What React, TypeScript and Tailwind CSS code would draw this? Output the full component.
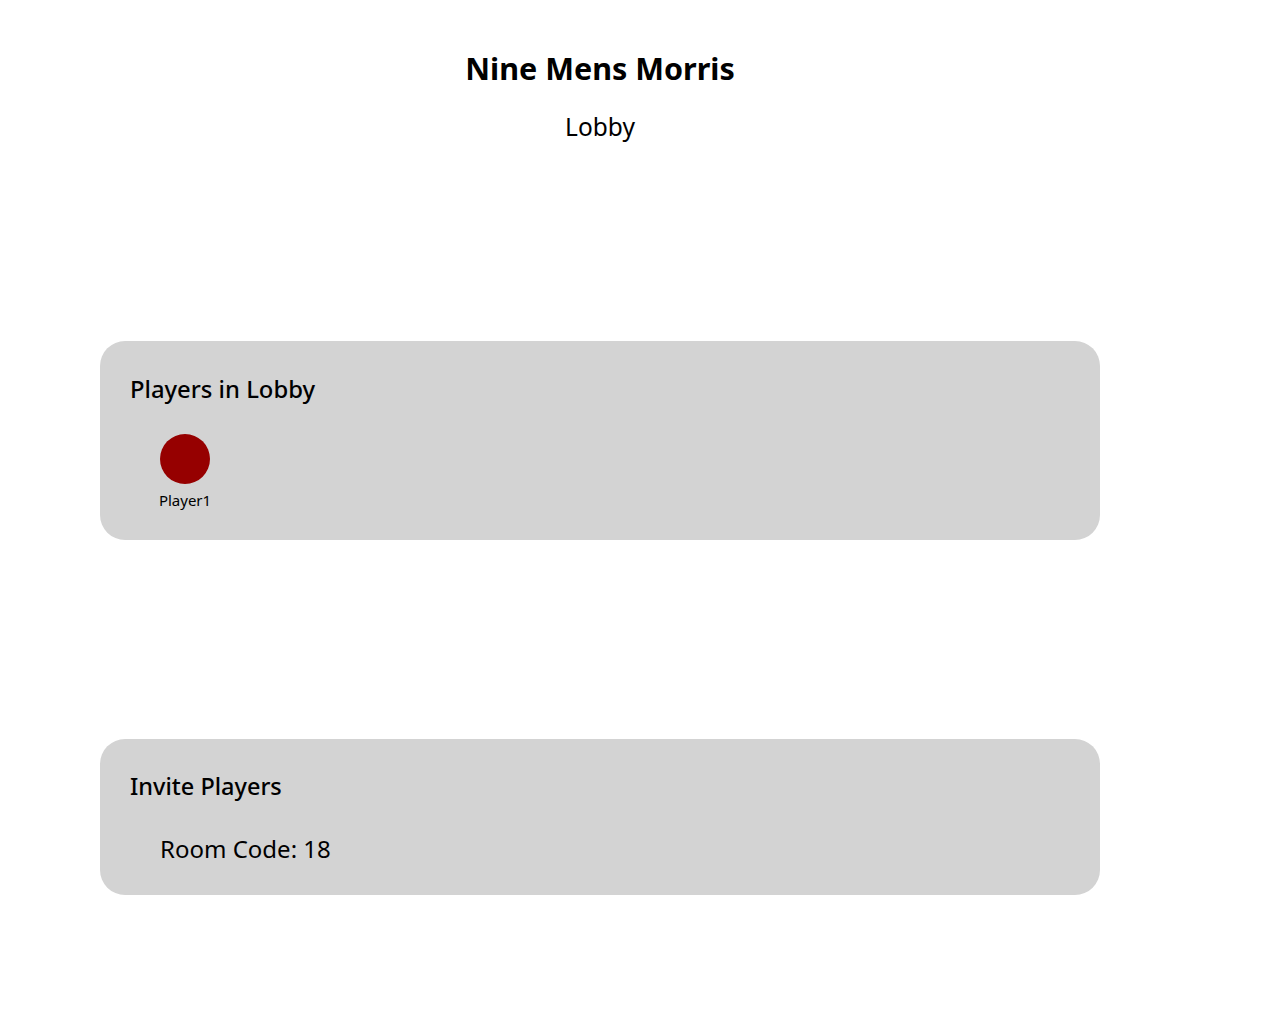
import React from "react";

export default function App() {
  return (
    <div className="min-h-[1024px] bg-white text-black" style={{ fontFamily: '"Noto Sans", "Open Sans", sans-serif' }}>
      <div className="w-[1200px] flex flex-col items-center">
        <h1 className="mt-[48px] text-[30.5px] font-bold leading-[40px]">Nine Mens Morris</h1>
        <h2 className="mt-[23px] text-[24.5px] leading-[32px]">Lobby</h2>
        <div className="mt-[198px] w-[1000px] h-[199px] rounded-[25px] bg-[#d3d3d3] px-[30px] pt-[32px] text-left">
          <h3 className="text-[23.8px] font-medium leading-[32px]">Players in Lobby</h3>
          <div className="mt-[29px] ml-[30px] flex flex-col items-center w-[50px]">
            <div className="w-[50px] h-[50px] rounded-full bg-[#960000]" />
            <div className="mt-[6px] text-[15px] leading-[20px] whitespace-nowrap">Player1</div>
          </div>
        </div>
        <div className="mt-[199px] w-[1000px] h-[156px] rounded-[25px] bg-[#d3d3d3] px-[30px] pt-[31px] text-left">
          <h3 className="text-[23.5px] font-medium leading-[32px]">Invite Players</h3>
          <div className="mt-[31px] ml-[30px] text-[24px] leading-[32px]">Room Code: 18</div>
        </div>
      </div>
    </div>
  );
}
